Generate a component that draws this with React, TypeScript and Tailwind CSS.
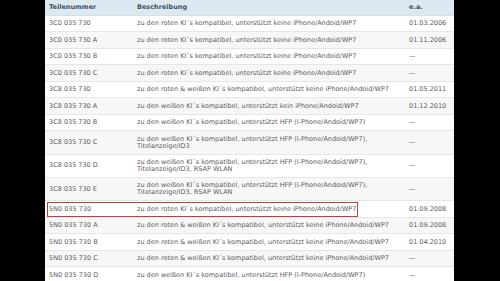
import React from 'react'

interface PartRow {
  part:  string
  desc:  string[]
  date:  string
  mark?: boolean
}

const ROT       = 'zu den roten KI´s kompatibel, unterstützt keine iPhone/Andoid/WP7'
const ROT_WEISS = 'zu den roten & weißen KI´s kompatibel, unterstützt keine iPhone/Andoid/WP7'
const HFP       = 'zu den weißen KI´s kompatibel, unterstützt HFP (I-Phone/Andoid/WP7)'

const rows: PartRow[] = [
  { part: '3C0 035 730',   desc: [ROT],       date: '01.03.2006' },
  { part: '3C0 035 730 A', desc: [ROT],       date: '01.11.2006' },
  { part: '3C0 035 730 B', desc: [ROT],       date: '—' },
  { part: '3C0 035 730 C', desc: [ROT],       date: '—' },
  { part: '3C8 035 730',   desc: [ROT_WEISS], date: '01.05.2011' },
  { part: '3C8 035 730 A', desc: ['zu den weißen KI´s kompatibel, unterstützt kein iPhone/Andoid/WP7'], date: '01.12.2010' },
  { part: '3C8 035 730 B', desc: [HFP],       date: '—' },
  { part: '3C8 035 730 C', desc: [HFP + ',', 'Titelanzeige/ID3'], date: '—' },
  { part: '3C8 035 730 D', desc: [HFP + ',', 'Titelanzeige/ID3, RSAP WLAN'], date: '—' },
  { part: '3C8 035 730 E', desc: [HFP + ',', 'Titelanzeige/ID3, RSAP WLAN'], date: '—' },
  { part: '5N0 035 730',   desc: [ROT],       date: '01.09.2008', mark: true },
  { part: '5N0 035 730 A', desc: [ROT_WEISS], date: '01.09.2008' },
  { part: '5N0 035 730 B', desc: [ROT_WEISS], date: '01.04.2010' },
  { part: '5N0 035 730 C', desc: [ROT_WEISS], date: '—' },
  { part: '5N0 035 730 D', desc: [HFP],       date: '—' },
]

export default function App() {
  return (
    <div className="w-[500px] h-[281px] bg-black overflow-hidden flex" style={{ fontFamily: '"DejaVu Sans", Verdana, sans-serif' }}>
      <div className="w-[45px] shrink-0" />
      <div className="w-[409px] shrink-0 bg-white flex flex-col">
        <div className="flex items-center h-[16px] shrink-0 bg-[#dde9f0] text-[6.5px] font-bold text-[#3e5263] border-b border-[#d3e0e8]">
          <div className="w-[92px] pl-[4px]">Teilenummer</div>
          <div className="w-[272px]">Beschreibung</div>
          <div className="flex-1">e.a.</div>
        </div>
        {rows.map((r, i) => (
          <div
            key={i}
            className={`relative flex shrink-0 items-center py-[4.35px] leading-[6.8px] text-[6.5px] text-[#5c5c5c] border-b border-[#e6e6e6] ${i % 2 === 0 ? 'bg-white' : 'bg-[#f7f7f7]'}`}
          >
            <div className="w-[92px] pl-[4px] whitespace-nowrap">{r.part}</div>
            <div className="w-[272px] whitespace-nowrap">
              {r.desc.map((d, j) => <div key={j}>{d}</div>)}
            </div>
            <div className="flex-1 whitespace-nowrap">{r.date}</div>
            {r.mark && (
              <div className="absolute left-[2px] top-[1px] bottom-[0px] w-[311px] border border-[#b8433c]" />
            )}
          </div>
        ))}
      </div>
    </div>
  )
}
